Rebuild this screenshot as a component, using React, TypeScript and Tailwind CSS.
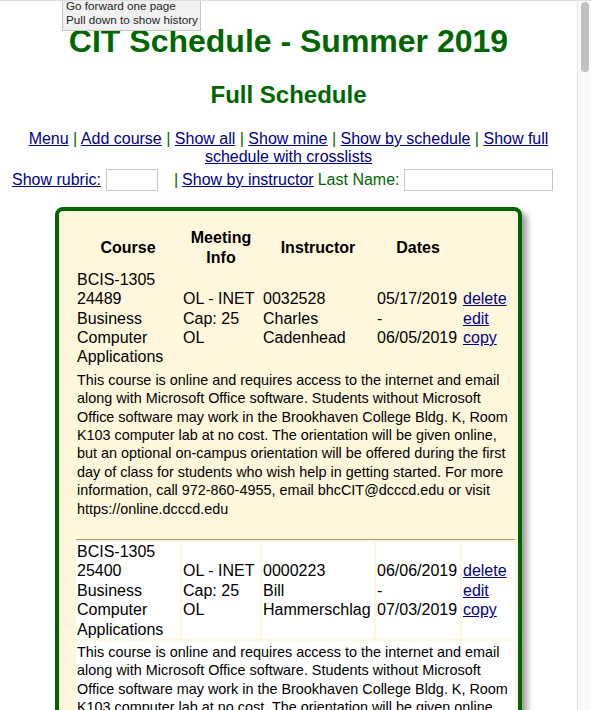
import React from 'react';

const FONT = { fontFamily: '"Liberation Sans", Arial, sans-serif' };

const DESCRIPTION =
  'This course is online and requires access to the internet and email along with Microsoft Office software. Students without Microsoft Office software may work in the Brookhaven College Bldg. K, Room K103 computer lab at no cost. The orientation will be given online, but an optional on-campus orientation will be offered during the first day of class for students who wish help in getting started. For more information, call 972-860-4955, email bhcCIT@dcccd.edu or visit https://online.dcccd.edu';

type Course = {
  rubric: string;
  crn: string;
  title: string[];
  meeting: string[];
  instructor: string[];
  dates: string[];
};

const courses: Course[] = [
  {
    rubric: 'BCIS-1305',
    crn: '24489',
    title: ['Business', 'Computer', 'Applications'],
    meeting: ['OL - INET', 'Cap: 25', 'OL'],
    instructor: ['0032528', 'Charles', 'Cadenhead'],
    dates: ['05/17/2019', '-', '06/05/2019'],
  },
  {
    rubric: 'BCIS-1305',
    crn: '25400',
    title: ['Business', 'Computer', 'Applications'],
    meeting: ['OL - INET', 'Cap: 25', 'OL'],
    instructor: ['0000223', 'Bill', 'Hammerschlag'],
    dates: ['06/06/2019', '-', '07/03/2019'],
  },
];

const cols = 'grid grid-cols-[104px_78px_112px_84px_53px] gap-x-[2px]';

const Link: React.FC<{ children: React.ReactNode }> = ({ children }) => (
  <a href="#" className="text-[#000088] underline">
    {children}
  </a>
);

const Pipe = () => <span className="text-[#006600]"> | </span>;

const Lines: React.FC<{ lines: string[] }> = ({ lines }) => (
  <div>
    {lines.map((l, i) => (
      <div key={i} className="whitespace-nowrap">
        {l}
      </div>
    ))}
  </div>
);

const CourseRows: React.FC<{ c: Course; alt: boolean }> = ({ c, alt }) => {
  const cell = `px-[1px] flex items-center ${alt ? 'bg-white' : ''}`;
  return (
    <>
      <div className={`${cols} leading-[19.4px] h-[97px]`}>
        <div className={cell}>
          <Lines lines={[c.rubric, c.crn, ...c.title]} />
        </div>
        <div className={cell}>
          <Lines lines={c.meeting} />
        </div>
        <div className={cell}>
          <Lines lines={c.instructor} />
        </div>
        <div className={cell}>
          <Lines lines={c.dates} />
        </div>
        <div className={cell}>
          <div className="flex flex-col">
            <Link>delete</Link>
            <Link>edit</Link>
            <Link>copy</Link>
          </div>
        </div>
      </div>
      <div className={`px-[1px] pt-[2px] pb-0 text-[14.4px] leading-[18.4px] ${alt ? 'bg-white' : ''}`}>
        {DESCRIPTION}
      </div>
    </>
  );
};

export default function App() {
  return (
    <div
      className="relative flex w-[591px] h-[710px] overflow-hidden bg-white border-t border-[#dedede] text-black"
      style={FONT}
    >
      <main className="w-[577px] flex flex-col">
        <h1 className="mt-[22px] text-center text-[32px] leading-[37px] font-bold text-[#006600]">
          CIT Schedule - Summer 2019
        </h1>
        <h2 className="mt-[21px] text-center text-[24px] leading-[28px] font-bold text-[#006600]">
          Full Schedule
        </h2>

        <p className="mt-[21px] px-[8px] text-center text-[16px] leading-[18.4px]">
          <Link>Menu</Link>
          <Pipe />
          <Link>Add course</Link>
          <Pipe />
          <Link>Show all</Link>
          <Pipe />
          <Link>Show mine</Link>
          <Pipe />
          <Link>Show by schedule</Link>
          <Pipe />
          <Link>Show full schedule with crosslists</Link>
        </p>

        <div className="mt-[2px] h-[22px] pl-[12px] flex items-center text-[16px] leading-[18.4px]">
          <Link>Show rubric:</Link>
          <input
            type="text"
            className="ml-[5px] w-[52px] h-[22px] border border-[#c8c8c8] bg-white"
          />
          <span className="ml-[16px] text-[#006600]">|</span>
          <span className="ml-[4px]">
            <Link>Show by instructor</Link>
          </span>
          <span className="ml-[4px] text-[#006600]">Last Name:</span>
          <input
            type="text"
            className="ml-[4px] w-[149px] h-[22px] border border-[#c8c8c8] bg-white"
          />
        </div>

        <section className="mt-[16px] mx-auto w-[467px] shrink-0 rounded-[8px] border-4 border-[#006400] bg-[#fff7dc] pt-[17px] pl-[17px] pr-[3px] pb-[20px] shadow-[5px_5px_6px_#9a9a9a] text-[16px]">
          <div className="flex flex-col gap-y-[2px]">
            <div className={`${cols} h-[40px] font-bold leading-[19.5px] text-center`}>
              <div className="flex items-center justify-center">Course</div>
              <div className="flex items-center justify-center">
                Meeting
                <br />
                Info
              </div>
              <div className="flex items-center justify-center">Instructor</div>
              <div className="flex items-center justify-center">Dates</div>
              <div />
            </div>

            {courses.map((c, i) => (
              <React.Fragment key={c.crn}>
                {i > 0 && <div className="h-[20px] border-b border-[#a09882]" />}
                <CourseRows c={c} alt={i % 2 === 1} />
              </React.Fragment>
            ))}
          </div>
        </section>
      </main>

      {/* scrollbar */}
      <div className="w-[14px] h-full bg-[#fafafa] border-l border-[#e6e6e6] flex justify-center">
        <div className="mt-[1px] w-[8px] h-[70px] rounded-full bg-[#c1c1c1]" />
      </div>

      {/* browser back-button tooltip */}
      <div className="absolute left-[62px] top-[-4px] w-[139px] h-[34px] border border-[#c6c6c6] bg-[#f1f1f1] px-[3px] pt-[1px] text-[11.7px] leading-[14px] text-[#1e1e1e] whitespace-nowrap">
        <div>Go forward one page</div>
        <div>Pull down to show history</div>
      </div>
    </div>
  );
}
